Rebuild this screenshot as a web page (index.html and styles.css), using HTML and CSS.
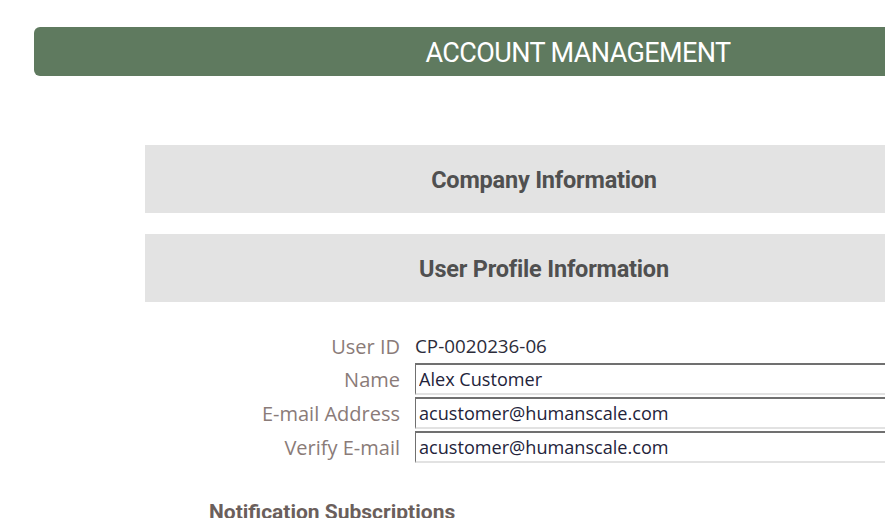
FILE: index.html
```html
<!DOCTYPE html>
<html>
<head>
    <meta charset="UTF-8">
    <title>Account Management</title>
    <link rel="stylesheet" href="styles.css">
</head>
<body>
    <div class="banner">ACCOUNT MANAGEMENT</div>

    <div class="content">
        <div class="section">Company Information</div>
        <div class="section">User Profile Information</div>

        <form class="profile">
            <label class="lbl">User ID</label>
            <span class="val">CP-0020236-06</span>

            <label class="lbl" for="name">Name</label>
            <input class="field" id="name" type="text" value="Alex Customer">

            <label class="lbl" for="email">E-mail Address</label>
            <input class="field" id="email" type="text" value="acustomer@humanscale.com">

            <label class="lbl" for="email2">Verify E-mail</label>
            <input class="field" id="email2" type="text" value="acustomer@humanscale.com">
        </form>

        <h3 class="subhead">Notification Subscriptions</h3>
    </div>
</body>
</html>
```

FILE: styles.css
```css
*{
    margin: 0;
    padding: 0;
    box-sizing: border-box;
}
html,body{
    width: 100%;
    height: 100%;
    overflow: hidden;
    background: #fff;
}
body{
    font-family: "Open Sans", "Noto Sans", sans-serif;
}
.banner{
    width: 1088px;
    height: 49px;
    margin: 27px 0 0 34px;
    padding-top: 3px;
    background: #5f7a5f;
    border-radius: 6px;
    color: #fff;
    font-family: Roboto, sans-serif;
    font-size: 27px;
    letter-spacing: -0.6px;
    line-height: 46px;
    text-align: center;
}
.content{
    width: 798px;
    margin: 69px 0 0 145px;
}
.section{
    height: 68px;
    margin-bottom: 21px;
    padding-top: 2px;
    background: #e3e3e3;
    color: #505050;
    font-family: Roboto, sans-serif;
    font-weight: 700;
    font-size: 23.5px;
    letter-spacing: -0.2px;
    line-height: 66px;
    text-align: center;
}
/* labels on the left, values and inputs on the right */
.profile{
    display: grid;
    grid-template-columns: 255px 500px;
    column-gap: 15px;
    row-gap: 2px;
    align-items: center;
    margin-top: 29px;
}
.lbl{
    color: #8a7b78;
    font-size: 20px;
    text-align: right;
}
.val{
    height: 30px;
    line-height: 30px;
    color: #2c2c3a;
    font-size: 18.8px;
}
.field{
    height: 32px;
    padding: 0 3px;
    border: 0;
    border-top: 2px solid #707070;
    border-left: 1px solid #707070;
    border-bottom: 2px solid #e2e2e2;
    background: #fff;
    color: #23233a;
    font-family: "Open Sans", "Noto Sans", sans-serif;
    font-size: 18.1px;
    outline: none;
}
.subhead{
    margin: 37px 0 0 64px;
    color: #6b5f5c;
    font-family: Roboto, sans-serif;
    font-weight: 700;
    font-size: 21px;
}
```
